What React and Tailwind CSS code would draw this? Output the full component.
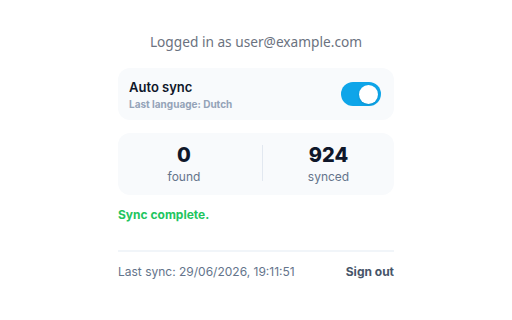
import React, { useState } from "react";

function Toggle({ on, onChange }) {
  return (
    <button
      type="button"
      onClick={() => onChange(!on)}
      className={
        "relative flex h-[24px] w-[40px] items-center rounded-full px-[3px] " +
        (on ? "justify-end bg-[#0ea5e9]" : "justify-start bg-slate-300")
      }
    >
      <span className="block h-[19px] w-[19px] rounded-full bg-white shadow-sm" />
    </button>
  );
}

export default function App() {
  const [autoSync, setAutoSync] = useState(true);

  return (
    <div className="min-h-[320px] w-full bg-white font-['Inter',sans-serif]">
      <div className="mx-auto flex w-[276px] flex-col pt-[32px]">
        {/* --- cabecera --- */}
        <p className="text-center font-['Noto_Sans',sans-serif] text-[13.7px] leading-[20px] text-[#6b7280]">
          Logged in as user@example.com
        </p>

        {/* --- auto sync --- */}
        <div className="mt-4 flex items-center justify-between rounded-[12px] bg-[#f8fafc] py-[9px] pl-[11px] pr-[13px]">
          <div className="flex flex-col">
            <span className="text-[13px] font-semibold leading-[20px] text-[#0f172a]">Auto sync</span>
            <span className="text-[10px] font-bold leading-[14px] text-[#94a3b8]">
              Last language: Dutch
            </span>
          </div>
          <Toggle on={autoSync} onChange={setAutoSync} />
        </div>

        {/* --- contadores --- */}
        <div className="mt-[13px] flex items-stretch rounded-[12px] bg-[#f8fafc] pb-[10px] pt-2">
          <div className="flex w-[132px] flex-col items-center">
            <span className="text-[20px] font-extrabold leading-[28px] text-[#0f172a]">0</span>
            <span className="text-[12px] leading-[16px] text-[#64748b]">found</span>
          </div>
          <div className="my-[4px] ml-[12px] w-px bg-[#e2e8f0]" />
          <div className="flex flex-1 flex-col items-center">
            <span className="text-[20px] font-extrabold leading-[28px] text-[#0f172a]">924</span>
            <span className="text-[12px] leading-[16px] text-[#64748b]">synced</span>
          </div>
        </div>

        <p className="mt-3 text-[12px] font-bold leading-[16px] text-[#22c55e]">Sync complete.</p>

        {/* --- pie --- */}
        <div className="mt-[27px] flex items-center justify-between border-t-2 border-[#f1f5f9] pt-3">
          <span className="text-[12px] leading-[16px] text-[#64748b]">Last sync: 29/06/2026, 19:11:51</span>
          <button type="button" className="text-[12px] font-bold leading-[16px] text-[#475569]">
            Sign out
          </button>
        </div>
      </div>
    </div>
  );
}
